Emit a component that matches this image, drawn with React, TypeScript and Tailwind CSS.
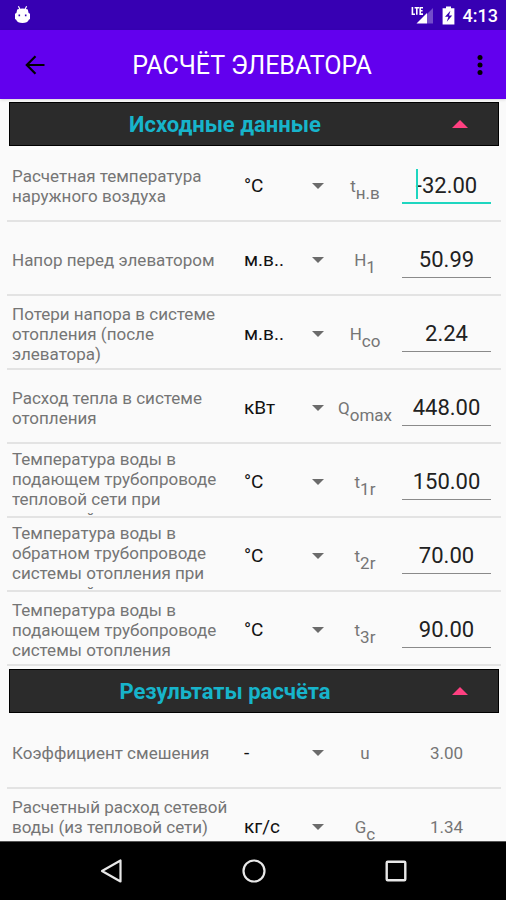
import React, { useState } from "react";

type Row = {
  id: string;
  label: string;
  unit: string;
  symbol: string;
  sub?: string;
  value: string;
  active?: boolean;
  tall?: boolean;
};

const inputs: Row[] = [
  { id: "tnv", label: "Расчетная температура наружного воздуха", unit: "°C", symbol: "t", sub: "н.в", value: "-32.00", active: true },
  { id: "h1", label: "Напор перед элеватором", unit: "м.в..", symbol: "H", sub: "1", value: "50.99" },
  { id: "hco", label: "Потери напора в системе отопления (после элеватора)", unit: "м.в..", symbol: "H", sub: "со", value: "2.24" },
  { id: "qomax", label: "Расход тепла в системе отопления", unit: "кВт", symbol: "Q", sub: "omax", value: "448.00" },
  { id: "t1r", label: "Температура воды в подающем трубопроводе тепловой сети при расчетной", unit: "°C", symbol: "t", sub: "1r", value: "150.00" },
  { id: "t2r", label: "Температура воды в обратном трубопроводе системы отопления при расчетной", unit: "°C", symbol: "t", sub: "2r", value: "70.00" },
  { id: "t3r", label: "Температура воды в подающем трубопроводе системы отопления", unit: "°C", symbol: "t", sub: "3r", value: "90.00" },
];

const results: Row[] = [
  { id: "u", label: "Коэффициент смешения", unit: "-", symbol: "u", value: "3.00" },
  { id: "gc", label: "Расчетный расход сетевой воды (из тепловой сети)", unit: "кг/с", symbol: "G", sub: "с", value: "1.34", tall: true },
];

function StatusBar() {
  return (
    <div className="flex h-[30px] shrink-0 items-center justify-between bg-[#3700b3] pr-2 pl-[14px] text-white">
      <svg width="17" height="18" viewBox="0 0 17 18" fill="currentColor">
        <path d="M4.4 0.3 5.8 3M12.6 0.3 11.2 3" stroke="currentColor" strokeWidth="1.2" />
        <path
          fillRule="evenodd"
          d="M3.2 3.4Q8.5 1.4 13.8 3.4L14.6 7 16 7.8V13L14.8 13.8Q13.6 17 8.5 17 3.4 17 2.2 13.8L1 13V7.8L2.4 7ZM4.5 8.6V10.2H6.1V8.6ZM10.9 8.6V10.2H12.5V8.6Z"
        />
      </svg>
      <div className="flex items-center">
        <svg width="23" height="18" viewBox="0 0 23 18" fill="none">
          <path d="M1.4 1V8.2H4M3.6 1.7H8M5.8 1.7V8.8M12 1.7H9.2V8.1H12M9.2 4.8H11.6" stroke="#fff" strokeWidth="1.6" />
          <path d="M22 2V17.5H16V8Z" fill="#fff" fillOpacity="0.3" />
          <path d="M16 7V17.5H5.5Z" fill="#fff" />
        </svg>
        <svg className="ml-2" width="13" height="19" viewBox="0 0 13 19" fill="#fff">
          <path fillRule="evenodd" d="M4 0.5H9V2.3H12.4V18.5H0.6V2.3H4ZM8.4 4.8 3 10.8H6.4L4.8 15.8 10.2 9.4H7Z" />
        </svg>
        <span className="ml-2 pt-[2px] text-[18px] leading-6 font-medium">4:13</span>
      </div>
    </div>
  );
}

function AppBar() {
  return (
    <header className="flex h-[69px] shrink-0 items-center justify-between bg-[#6200ee] pr-1 pl-6 text-black shadow-sm">
      <button type="button" aria-label="Назад">
        <svg width="22" height="22" viewBox="0 0 22 22" fill="none" stroke="currentColor" strokeWidth="2.2">
          <path d="M20.5 11H3M11.5 2.2 2.8 11 11.5 19.8" />
        </svg>
      </button>
      <h1 className="pt-[3px] text-[25px] leading-8 text-white">РАСЧЁТ ЭЛЕВАТОРА</h1>
      <button type="button" aria-label="Меню" className="flex w-11 justify-center">
        <svg width="24" height="24" viewBox="0 0 24 24" fill="currentColor">
          <circle cx="12" cy="4.6" r="2.5" />
          <circle cx="12" cy="12" r="2.5" />
          <circle cx="12" cy="19.4" r="2.5" />
        </svg>
      </button>
    </header>
  );
}

function SectionHeader({ title, open, onToggle }: { title: string; open: boolean; onToggle: () => void }) {
  return (
    <h2 className="mx-[2px] mt-[3px] mb-[2px]">
      <button
        type="button"
        aria-expanded={open}
        onClick={onToggle}
        className="flex h-11 w-full items-center gap-3 border border-black bg-[#2b2b2b] pr-[30px] text-[22px] leading-7 font-bold text-[#17b4cb]"
      >
        <span className="flex-1 pt-[2px]">{title}</span>
        <svg className={open ? "" : "rotate-180"} width="16" height="8" viewBox="0 0 16 8" fill="#ff4081">
          <path d="M8 0 16 8H0Z" />
        </svg>
      </button>
    </h2>
  );
}

function ParamRow({ row, readOnly }: { row: Row; readOnly?: boolean }) {
  const [value, setValue] = useState(row.value);

  return (
    <div className="grid h-[74px] grid-cols-[1fr_91px_70px_101px] items-center border-b-2 border-[#e3e3e3] pt-1 pl-[5px] text-[17px] leading-5 text-[#757575]">
      <label htmlFor={row.id} className={`max-h-[66px] overflow-hidden pr-1 ${row.tall ? "min-h-[60px]" : ""}`}>
        {row.label}
      </label>
      <div className="relative">
        <select aria-label={`${row.label}, единица`} className="h-9 w-full appearance-none bg-transparent pl-[5px] text-[19px] leading-6 text-[#111]">
          <option>{row.unit}</option>
        </select>
        <svg className="pointer-events-none absolute top-1/2 right-[6px] -translate-y-1/2" width="12" height="6" viewBox="0 0 12 6" fill="#6b6b6b">
          <path d="M0 0H12L6 6Z" />
        </svg>
      </div>
      <span className="text-center whitespace-nowrap">
        {row.symbol}
        {row.sub && <sub className="-bottom-[7px] text-[17px]">{row.sub}</sub>}
      </span>
      {readOnly ? (
        <output id={row.id} className="pr-2 text-center">
          {row.value}
        </output>
      ) : (
        <div className="relative pr-[10px] pl-[2px]">
          <input
            id={row.id}
            value={value}
            onChange={(e) => setValue(e.target.value)}
            className={`h-9 w-full bg-transparent text-center text-[22px] leading-7 text-[#212121] outline-none ${
              row.active ? "border-b-2 border-[#1ed6c0]" : "border-b border-[#8a8a8a]"
            }`}
          />
          {row.active && <span className="absolute top-px left-4 h-[30px] w-[2px] bg-[#1ed6c0]" />}
        </div>
      )}
    </div>
  );
}

function NavBar() {
  return (
    <nav className="flex h-[59px] shrink-0 items-center justify-center gap-[118px] border-t border-[#555] bg-black pl-px text-[#e8e8e8]">
      <button type="button" aria-label="Назад">
        <svg width="24" height="24" viewBox="0 0 24 24" fill="none" stroke="currentColor" strokeWidth="2.2" strokeLinejoin="round">
          <path d="M20.5 1.5V22.5L2 12Z" />
        </svg>
      </button>
      <button type="button" aria-label="Домой">
        <svg width="24" height="24" viewBox="0 0 24 24" fill="none" stroke="currentColor" strokeWidth="2.2">
          <circle cx="12" cy="12" r="10.5" />
        </svg>
      </button>
      <button type="button" aria-label="Обзор">
        <svg width="24" height="24" viewBox="0 0 24 24" fill="none" stroke="currentColor" strokeWidth="2.4">
          <rect x="2.7" y="2.7" width="18.6" height="18.6" rx="1" />
        </svg>
      </button>
    </nav>
  );
}

export default function App() {
  const [inputsOpen, setInputsOpen] = useState(true);
  const [resultsOpen, setResultsOpen] = useState(true);

  return (
    <div className="flex h-screen flex-col bg-[#fafafa] font-[Roboto,sans-serif]">
      <StatusBar />
      <AppBar />
      <main className="min-h-0 flex-1 overflow-y-auto pr-[5px] pl-[7px] [scrollbar-width:none]">
        <SectionHeader title="Исходные данные" open={inputsOpen} onToggle={() => setInputsOpen(!inputsOpen)} />
        {inputsOpen && inputs.map((row) => <ParamRow key={row.id} row={row} />)}
        <SectionHeader title="Результаты расчёта" open={resultsOpen} onToggle={() => setResultsOpen(!resultsOpen)} />
        {resultsOpen && results.map((row) => <ParamRow key={row.id} row={row} readOnly />)}
      </main>
      <NavBar />
    </div>
  );
}
